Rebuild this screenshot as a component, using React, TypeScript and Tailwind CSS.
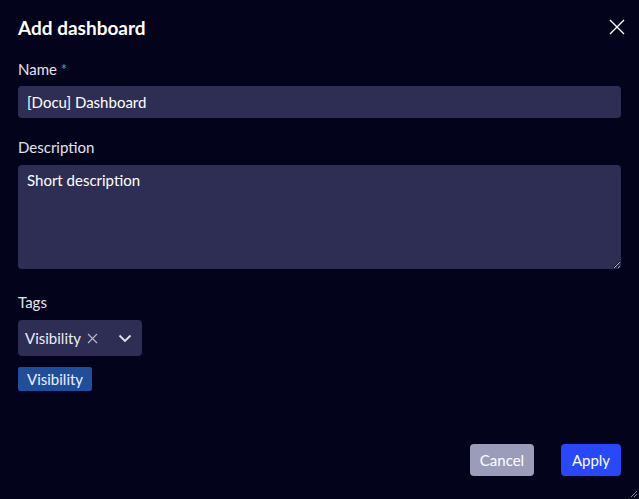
import { useState } from "react";

export default function App() {
  const [name, setName] = useState("[Docu] Dashboard");
  const [desc, setDesc] = useState("Short description");

  return (
    <div
      className="w-[639px] h-[499px] bg-[#03031b] text-white relative overflow-hidden"
      style={{ fontFamily: "Lato, 'Noto Sans', sans-serif" }}
    >
      <div className="px-[18px] pt-[15px] flex flex-col">
        {/* Header */}
        <div className="flex items-center justify-between h-[24px]">
          <h2 className="text-[19px] font-bold leading-none">Add dashboard</h2>
          <button className="mr-[-5px] text-white">
            <svg width="18" height="18" viewBox="0 0 18 18" fill="none" stroke="currentColor" strokeWidth="1.4">
              <path d="M2 2L16 16M16 2L2 16" />
            </svg>
          </button>
        </div>

        {/* Name */}
        <label className="mt-[21px] text-[15px] leading-[18px] text-[#e4e4ee]">
          Name <span className="text-[#3aa6e0]">*</span>
        </label>
        <input
          value={name}
          onChange={(e) => setName(e.target.value)}
          className="mt-[8px] h-[32px] w-full rounded-[4px] bg-[#2e2e54] px-[9px] text-[15px] text-white outline-none"
        />

        {/* Description */}
        <label className="mt-[20px] text-[15px] leading-[18px] text-[#e4e4ee]">Description</label>
        <textarea
          value={desc}
          onChange={(e) => setDesc(e.target.value)}
          className="mt-[9px] h-[104px] w-full rounded-[4px] bg-[#2e2e54] px-[9px] py-[5px] text-[15px] leading-[20px] text-white outline-none"
        />

        {/* Tags */}
        <label className="mt-[24px] text-[15px] leading-[18px] text-[#e4e4ee]">Tags</label>
        <div className="mt-[9px] flex h-[36px] w-[124px] items-center rounded-[4px] bg-[#2e2e54] pl-[7px] pr-[10px]">
          <span className="text-[15px] text-[#ececf4]">Visibility</span>
          <svg className="ml-[6px]" width="11" height="11" viewBox="0 0 11 11" fill="none" stroke="#b8b8cc" strokeWidth="1.1">
            <path d="M1 1L10 10M10 1L1 10" />
          </svg>
          <svg className="ml-auto" width="14" height="9" viewBox="0 0 14 9" fill="none" stroke="#e4e4ee" strokeWidth="1.8">
            <path d="M1.5 1.5L7 7L12.5 1.5" />
          </svg>
        </div>
        <div className="mt-[11px] flex">
          <span className="h-[24px] rounded-[2px] bg-[#1f4f9c] px-[9px] text-[15px] leading-[24px] text-[#eef]">
            Visibility
          </span>
        </div>
      </div>

      {/* Footer buttons */}
      <div className="absolute right-[18px] top-[444px] flex gap-[27px]">
        <button className="h-[32px] w-[64px] rounded-[4px] bg-[#9a9cb9] text-[15px] text-white">Cancel</button>
        <button className="h-[32px] w-[60px] rounded-[4px] bg-[#2849fb] text-[15px] text-white">Apply</button>
      </div>

      {/* resize grip */}
      <svg className="absolute right-[1px] bottom-[1px]" width="8" height="8" viewBox="0 0 8 8" stroke="#8a8aa0" strokeWidth="1">
        <path d="M1 7L7 1M4 7L7 4" />
      </svg>
    </div>
  );
}
